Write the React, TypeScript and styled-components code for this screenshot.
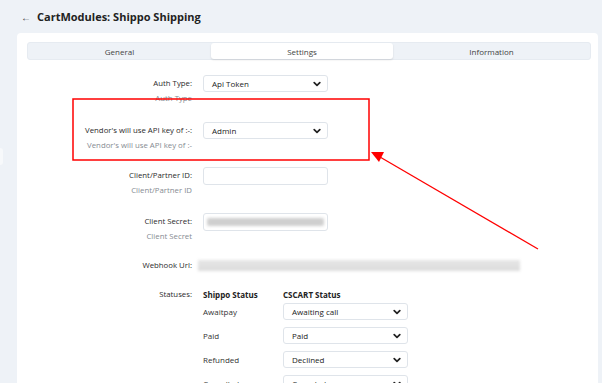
import React from "react";
import styled, { createGlobalStyle } from "styled-components";

const GlobalStyle = createGlobalStyle`
  html, body { margin: 0; padding: 0; }
  body {
    background: #eef2f7;
    font-family: "Open Sans", "Noto Sans", sans-serif;
    color: #333;
    width: 602px;
    height: 383px;
    overflow: hidden;
  }
`;

const Page = styled.div`
  position: relative;
  width: 602px;
  height: 383px;
  overflow: hidden;
`;

const Header = styled.div`
  display: flex;
  align-items: center;
  gap: 6px;
  height: 33px;
  padding-left: 21px;
  box-sizing: border-box;
`;

const Back = styled.span`
  font-size: 10px;
  color: #444;
`;

const Title = styled.h1`
  margin: 0;
  font-size: 11px;
  font-weight: 700;
  color: #222;
`;

const SideTab = styled.div`
  position: absolute;
  left: 0;
  top: 148px;
  width: 3px;
  height: 17px;
  background: #f7f9fb;
  border-radius: 0 3px 3px 0;
`;

const Card = styled.div`
  margin: 0 4px 0 17px;
  background: #fff;
  border-radius: 4px 4px 0 0;
  padding: 9px 7px 0 10px;
  height: 360px;
  box-sizing: border-box;
`;

const Tabs = styled.div`
  display: grid;
  grid-template-columns: 183px 182px 1fr;
  height: 18px;
  background: #eef2f7;
  border: 1px solid #e6ebf1;
  border-radius: 3px;
  box-sizing: border-box;
`;

const Tab = styled.div<{ $active?: boolean }>`
  display: flex;
  align-items: center;
  justify-content: center;
  font-size: 8px;
  color: #444;
  background: ${(p) => (p.$active ? "#fff" : "transparent")};
  border-radius: 3px;
  box-shadow: ${(p) => (p.$active ? "0 1px 2px rgba(0,0,0,0.12)" : "none")};
`;

const Form = styled.div`
  display: flex;
  flex-direction: column;
  padding-top: 15px;
`;

const Field = styled.div<{ $gap?: number }>`
  display: grid;
  grid-template-columns: 165px auto;
  column-gap: 11px;
  margin-bottom: ${(p) => p.$gap ?? 16}px;
`;

const LabelCol = styled.div`
  display: flex;
  flex-direction: column;
  align-items: flex-end;
`;

const Label = styled.div`
  font-size: 7.8px;
  line-height: 17px;
  color: #2b2b2b;
  white-space: nowrap;
`;

const Help = styled.div`
  font-size: 7.8px;
  line-height: 13px;
  color: #868b92;
  white-space: nowrap;
`;

const SelectBox = styled.div<{ $w?: number }>`
  display: flex;
  align-items: center;
  justify-content: space-between;
  width: ${(p) => p.$w ?? 125}px;
  height: 17px;
  box-sizing: border-box;
  border: 1px solid #dfe4ea;
  border-radius: 3px;
  padding: 0 6px 0 8px;
  font-size: 8px;
  color: #222;
  background: #fff;
`;

const InputBox = styled.div`
  display: flex;
  align-items: center;
  width: 125px;
  height: 18px;
  box-sizing: border-box;
  border: 1px solid #dfe4ea;
  border-radius: 3px;
  padding: 0 3px;
  background: #fff;
`;

const Blurred = styled.span<{ $w: number }>`
  display: block;
  width: ${(p) => p.$w}px;
  height: 8px;
  background: #cfcfcf;
  filter: blur(1.6px);
  border-radius: 2px;
`;

const UrlBlur = styled.div`
  display: flex;
  align-items: center;
  height: 17px;
  margin-left: -5px;
`;

const UrlBar = styled.span`
  display: block;
  width: 322px;
  height: 11px;
  background: linear-gradient(#e6e6e6, #dcdcdc);
  filter: blur(1.4px);
`;

const StatusGrid = styled.div`
  display: grid;
  grid-template-columns: 80px 125px;
  row-gap: 7px;
  align-items: center;
`;

const StatusHead = styled.div`
  font-size: 8px;
  font-weight: 700;
  line-height: 9px;
  color: #222;
  margin-top: 4px;
  margin-bottom: -3px;
`;

const StatusName = styled.div`
  font-size: 8px;
  color: #333;
`;

const Overlay = styled.svg`
  position: absolute;
  left: 0;
  top: 0;
  pointer-events: none;
`;

const Chevron = () => (
  <svg width="8" height="6" viewBox="0 0 8 6">
    <path d="M1.2 1.6 L4 4.4 L6.8 1.6" fill="none" stroke="#222" strokeWidth="1.7" strokeLinecap="round" strokeLinejoin="round" />
  </svg>
);

const Select = ({ value, w }: { value: string; w?: number }) => (
  <SelectBox $w={w}>
    <span>{value}</span>
    <Chevron />
  </SelectBox>
);

const statuses = [
  ["Awaitpay", "Awaiting call"],
  ["Paid", "Paid"],
  ["Refunded", "Declined"],
  ["Cancelled", "Canceled"],
];

export default function App() {
  return (
    <Page>
      <GlobalStyle />
      <SideTab />
      <Header>
        <Back>←</Back>
        <Title>CartModules: Shippo Shipping</Title>
      </Header>
      <Card>
        <Tabs>
          <Tab>General</Tab>
          <Tab $active>Settings</Tab>
          <Tab>Information</Tab>
        </Tabs>
        <Form>
          <Field $gap={17}>
            <LabelCol>
              <Label>Auth Type:</Label>
              <Help>Auth Type</Help>
            </LabelCol>
            <Select value="Api Token" />
          </Field>
          <Field $gap={15}>
            <LabelCol>
              <Label>Vendor's will use API key of :-:</Label>
              <Help>Vendor's will use API key of :-</Help>
            </LabelCol>
            <Select value="Admin" />
          </Field>
          <Field $gap={16}>
            <LabelCol>
              <Label>Client/Partner ID:</Label>
              <Help>Client/Partner ID</Help>
            </LabelCol>
            <InputBox />
          </Field>
          <Field $gap={14}>
            <LabelCol>
              <Label>Client Secret:</Label>
              <Help>Client Secret</Help>
            </LabelCol>
            <InputBox>
              <Blurred $w={118} />
            </InputBox>
          </Field>
          <Field $gap={12}>
            <LabelCol>
              <Label>Webhook Url:</Label>
            </LabelCol>
            <UrlBlur>
              <UrlBar />
            </UrlBlur>
          </Field>
          <Field>
            <LabelCol>
              <Label>Statuses:</Label>
            </LabelCol>
            <StatusGrid>
              <StatusHead>Shippo Status</StatusHead>
              <StatusHead>CSCART Status</StatusHead>
              {statuses.map(([a, b]) => (
                <React.Fragment key={a}>
                  <StatusName>{a}</StatusName>
                  <Select value={b} />
                </React.Fragment>
              ))}
            </StatusGrid>
          </Field>
        </Form>
      </Card>
      <Overlay width="602" height="383" viewBox="0 0 602 383">
        <rect x="73" y="99" width="296" height="61" fill="none" stroke="#f00" strokeWidth="1.5" />
        <line x1="538" y1="249" x2="380" y2="157" stroke="#f00" strokeWidth="1.3" />
        <polygon points="371,152 384,152 379,162" fill="#f00" />
      </Overlay>
    </Page>
  );
}
